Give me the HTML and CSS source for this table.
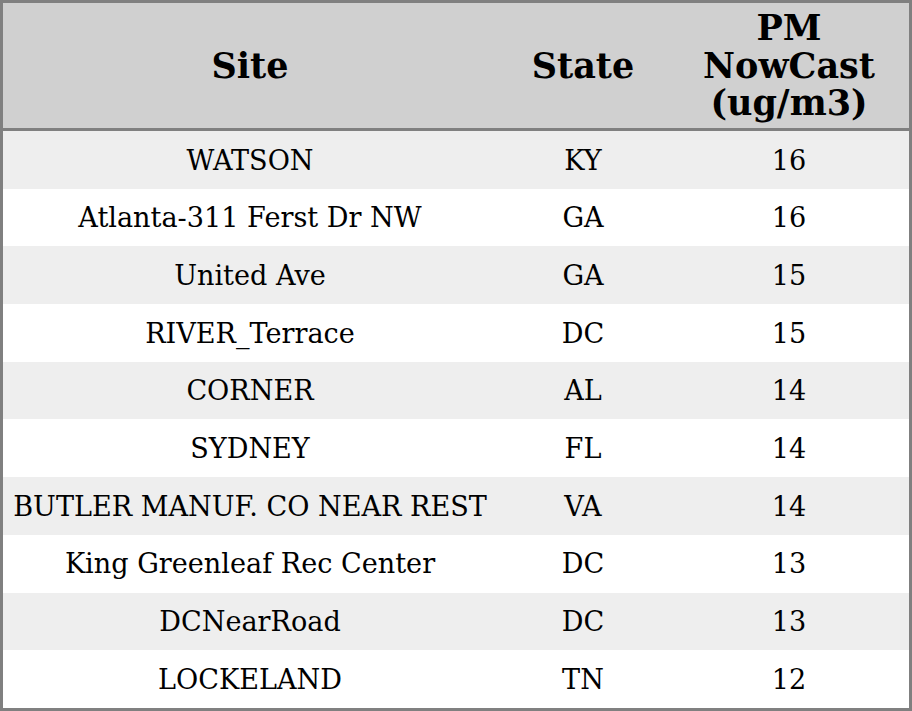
FILE: index.html
```html
<!DOCTYPE html>
<html>
<head>
<meta charset="utf-8">
<link rel="stylesheet" href="styles.css">
</head>
<body>
<table class="aq">
  <thead>
    <tr>
      <th class="c-site">Site</th>
      <th class="c-state">State</th>
      <th class="c-pm">PM<br>NowCast<br>(ug/m3)</th>
    </tr>
  </thead>
  <tbody>
    <tr><td>WATSON</td><td>KY</td><td>16</td></tr>
    <tr><td>Atlanta-311 Ferst Dr NW</td><td>GA</td><td>16</td></tr>
    <tr><td>United Ave</td><td>GA</td><td>15</td></tr>
    <tr><td>RIVER_Terrace</td><td>DC</td><td>15</td></tr>
    <tr><td>CORNER</td><td>AL</td><td>14</td></tr>
    <tr><td>SYDNEY</td><td>FL</td><td>14</td></tr>
    <tr><td>BUTLER MANUF. CO NEAR REST</td><td>VA</td><td>14</td></tr>
    <tr><td>King Greenleaf Rec Center</td><td>DC</td><td>13</td></tr>
    <tr><td>DCNearRoad</td><td>DC</td><td>13</td></tr>
    <tr><td>LOCKELAND</td><td>TN</td><td>12</td></tr>
  </tbody>
</table>
</body>
</html>
```

FILE: styles.css
```css
html, body {
  margin: 0;
  padding: 0;
  background: #ffffff;
}
.aq {
  width: 912px;
  border-collapse: collapse;
  border: 3px solid #808080;
  font-family: "DejaVu Serif", serif;
  color: #000;
  table-layout: fixed;
}
.aq th {
  background: #d0d0d0;
  font-size: 35px;
  font-weight: bold;
  line-height: 37.5px;
  padding: 6.25px 0;
  text-align: center;
  vertical-align: middle;
  border-bottom: 3px solid #808080;
}
.c-site { width: 494px; }
.c-state { width: 172px; }
.c-pm { width: 240px; }
.aq td {
  font-size: 27.1px;
  line-height: 32px;
  padding: 13.6px 0 12.1px;
  text-align: center;
  white-space: nowrap;
}
.aq tbody tr:nth-child(odd) td {
  background: #eeeeee;
}
```
